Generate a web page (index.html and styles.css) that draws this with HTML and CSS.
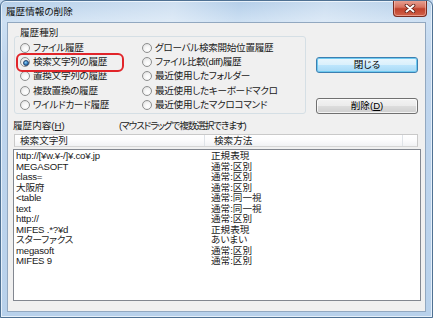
FILE: index.html
```html
<!DOCTYPE html>
<html lang="ja">
<head>
<meta charset="utf-8">
<title>履歴情報の削除</title>
<link rel="stylesheet" href="styles.css">
</head>
<body>
<div class="window">
  <div class="titlebar">
    <span class="title">履歴情報の削除</span>
    <span class="close">
      <svg width="12" height="9" viewBox="0 0 12 9">
        <path d="M2.5 1.5 L9.5 7.5 M9.5 1.5 L2.5 7.5" stroke="#5a1d14" stroke-width="3.6" stroke-linecap="round"/>
        <path d="M2.5 1.5 L9.5 7.5 M9.5 1.5 L2.5 7.5" stroke="#ffffff" stroke-width="2" stroke-linecap="round"/>
      </svg>
    </span>
  </div>
  <div class="client">
    <div class="top">
      <div class="group">
        <span class="group-label">履歴種別</span>
        <div class="radios">
          <label class="radio"><span class="dot"></span>ファイル履歴</label>
          <label class="radio"><span class="dot checked"></span>検索文字列の履歴</label>
          <label class="radio"><span class="dot"></span>置換文字列の履歴</label>
          <label class="radio"><span class="dot"></span>複数置換の履歴</label>
          <label class="radio"><span class="dot"></span>ワイルドカード履歴</label>
          <label class="radio"><span class="dot"></span>グローバル検索開始位置履歴</label>
          <label class="radio"><span class="dot"></span>ファイル比較(diff)履歴</label>
          <label class="radio"><span class="dot"></span>最近使用したフォルダー</label>
          <label class="radio"><span class="dot"></span>最近使用したキーボードマクロ</label>
          <label class="radio"><span class="dot"></span>最近使用したマクロコマンド</label>
        </div>
        <span class="highlight"></span>
      </div>
      <div class="buttons">
        <button class="btn default">閉じる</button>
        <button class="btn">削除(<u>D</u>)</button>
      </div>
    </div>
    <div class="list-label">
      <span class="lbl">履歴内容(<u>H</u>)</span>
      <span class="hint">(マウスドラッグで複数選択できます)</span>
    </div>
    <div class="header">
      <div class="hcol h1">検索文字列</div>
      <div class="hcol h2">検索方法</div>
      <div class="hcol h3"></div>
    </div>
    <div class="list">
      <div class="row"><span class="c1">http://[¥w.¥-/]¥.co¥.jp</span><span class="c2">正規表現</span></div>
      <div class="row"><span class="c1">MEGASOFT</span><span class="c2">通常:区別</span></div>
      <div class="row"><span class="c1">class=</span><span class="c2">通常:区別</span></div>
      <div class="row"><span class="c1">大阪府</span><span class="c2">通常:区別</span></div>
      <div class="row"><span class="c1">&lt;table</span><span class="c2">通常:同一視</span></div>
      <div class="row"><span class="c1">text</span><span class="c2">通常:同一視</span></div>
      <div class="row"><span class="c1">http://</span><span class="c2">通常:区別</span></div>
      <div class="row"><span class="c1">MIFES .*?¥d</span><span class="c2">正規表現</span></div>
      <div class="row"><span class="c1">スターファクス</span><span class="c2">あいまい</span></div>
      <div class="row"><span class="c1">megasoft</span><span class="c2">通常:区別</span></div>
      <div class="row"><span class="c1">MIFES 9</span><span class="c2">通常:区別</span></div>
    </div>
  </div>
</div>
</body>
</html>
```
FILE: styles.css
```css
* { box-sizing: border-box; }

html, body {
  margin: 0;
  padding: 0;
  background: #c4d8ee;
}

body {
  font-family: "Liberation Sans", "Noto Sans CJK JP", sans-serif;
  font-size: 9.6px;
  color: #1a1a1a;
  font-feature-settings: "palt";
}

.window {
  width: 433px;
  height: 318px;
  display: flex;
  flex-direction: column;
  border: 1px solid #4f7193;
  border-radius: 6px 6px 0 0;
  background:
    linear-gradient(180deg, #b4cee9 0px, #cde0f3 20px, #c0d6ee 60px, #b8d1eb 100%);
  box-shadow: inset 0 0 0 1px #e6f0fa;
  overflow: hidden;
}

.titlebar {
  height: 21px;
  display: flex;
  align-items: flex-start;
  justify-content: space-between;
  padding: 0 5px 0 5px;
  background: linear-gradient(100deg, rgba(255,255,255,0) 0%, rgba(255,255,255,0.35) 40%, rgba(255,255,255,0) 55%, rgba(255,255,255,0.3) 75%, rgba(255,255,255,0) 100%);
}

.title {
  margin-top: 5px;
  line-height: 12px;
  color: #111;
}

.close {
  width: 34px;
  height: 17px;
  margin-top: -1px;
  display: flex;
  align-items: center;
  justify-content: center;
  border: 1px solid #7a2c20;
  border-top: none;
  border-radius: 0 0 4px 4px;
  background: linear-gradient(180deg, #e9a597 0%, #d7725f 45%, #c0412b 55%, #d1624a 100%);
  box-shadow: inset 0 0 0 1px rgba(255,210,200,0.5);
}

.client {
  flex: 1;
  margin: 0 6px 5px 6px;
  border: 1px solid #92a8c0;
  background: #f0f0f0;
  padding: 13px 5px 0 5px;
  display: flex;
  flex-direction: column;
}

.top {
  display: flex;
  align-items: flex-start;
}

.group {
  position: relative;
  margin-left: 1px;
  width: 292px;
  height: 78px;
  border: 1px solid #d5dfe5;
  border-radius: 3px;
  padding: 4px 0 0 5px;
}

.group-label {
  position: absolute;
  left: 4px;
  top: -10px;
  padding: 0 1px;
  line-height: 12px;
  background: #f0f0f0;
}

.radios {
  display: grid;
  grid-auto-flow: column;
  grid-template-rows: repeat(5, 14.2px);
  grid-template-columns: 122px auto;
}

.radio {
  display: flex;
  align-items: center;
  gap: 3px;
  line-height: 12px;
  white-space: nowrap;
  letter-spacing: -0.3px;
}

.dot {
  width: 10px;
  height: 10px;
  border-radius: 50%;
  border: 1px solid #8e8f8f;
  background: radial-gradient(circle at 60% 65%, #ffffff 0%, #f4f4f4 45%, #d4d4d4 100%);
  position: relative;
  flex: none;
}

.dot.checked::after {
  content: "";
  position: absolute;
  left: 2px;
  top: 2px;
  width: 4px;
  height: 4px;
  border-radius: 50%;
  background: radial-gradient(circle at 40% 35%, #8fd0f4 0%, #3b86c8 50%, #1c4f86 100%);
  border: 0.5px solid #20416a;
}

.highlight {
  position: absolute;
  left: 1px;
  top: 16px;
  width: 108px;
  height: 19px;
  border: 2px solid #e1252a;
  border-radius: 6px;
}

.buttons {
  margin-left: 10px;
  margin-top: 21px;
  display: flex;
  flex-direction: column;
  gap: 25px;
}

.btn {
  width: 102px;
  height: 16px;
  padding: 0;
  font: inherit;
  line-height: 12px;
  color: #000;
  border: 1px solid #707070;
  border-radius: 3px;
  background: linear-gradient(180deg, #f3f3f3 0%, #ebebeb 50%, #dddddd 50%, #cfcfcf 100%);
  box-shadow: inset 0 0 0 1px rgba(255,255,255,0.75);
}

.btn.default {
  border-color: #3c7fb1;
  background: linear-gradient(180deg, #eaf6fd 0%, #d9f0fc 50%, #bee6fd 50%, #a7d9f5 100%);
  box-shadow: inset 0 0 0 1px #6fcaf0;
}

.btn u { text-underline-offset: 1px; }

.list-label {
  margin-top: 6px;
  height: 12px;
  line-height: 12px;
  display: flex;
  white-space: nowrap;
}

.lbl { flex: 0 0 106px; }

.hint {
  flex: none;
  letter-spacing: -1.1px;
}

.header {
  margin-top: 2px;
  margin-left: 1px;
  width: 404px;
  height: 13px;
  display: flex;
  border: 1px solid #c9c9c9;
  border-bottom-color: #d5d5d5;
  background: linear-gradient(180deg, #ffffff 0%, #fbfbfc 50%, #f1f2f4 100%);
  line-height: 11px;
  color: #222;
}

.hcol { border-right: 1px solid #dfe3e8; }
.h1 { width: 190px; padding-left: 5px; }
.h2 { width: 198px; padding-left: 9px; }
.h3 { flex: 1; border-right: none; }

.list {
  margin-top: 2px;
  width: 408px;
  height: 152px;
  border: 1px solid #828790;
  background: #fff;
  padding-top: 1px;
}

.row {
  display: flex;
  height: 10.5px;
  line-height: 10.5px;
  padding-left: 2px;
  white-space: nowrap;
  font-size: 9.6px;
}

.c1 { width: 195px; letter-spacing: -0.2px; }
.c2 { flex: 1; }
```
